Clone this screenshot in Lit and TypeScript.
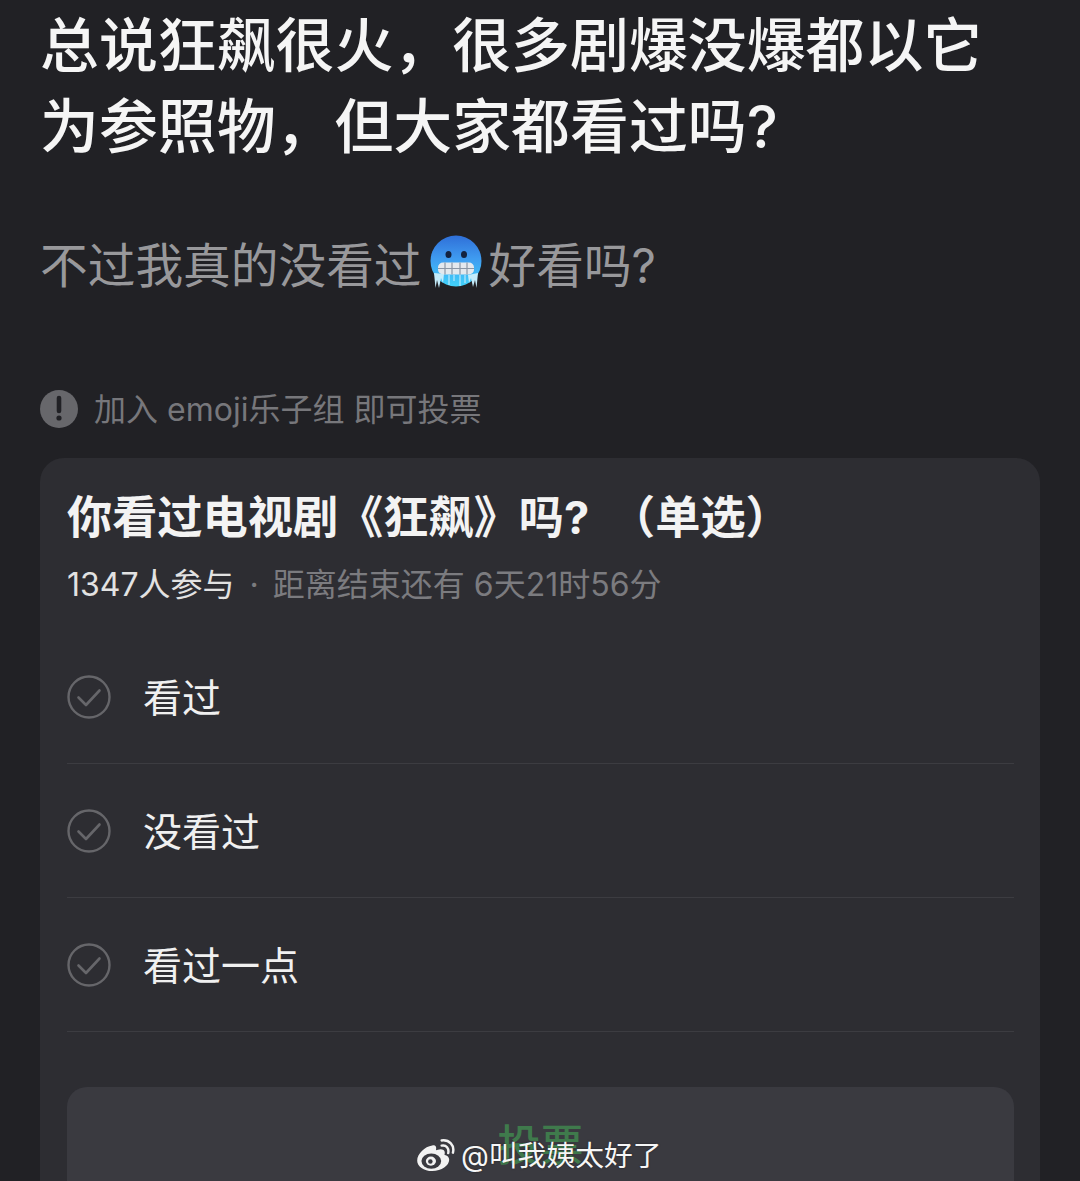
import { LitElement, html, css, svg } from 'lit';
import { customElement } from 'lit/decorators.js';

const OPTIONS = ['看过', '没看过', '看过一点'];

// freezing face emoji, drawn to sit inline with the subtitle text
const coldFace = svg`
  <svg class="emoji" viewBox="0 0 54 54" width="54" height="54">
    <defs>
      <linearGradient id="cold" x1="0" y1="0" x2="0" y2="1">
        <stop offset="0" stop-color="#2f6fd8"></stop>
        <stop offset="0.45" stop-color="#3f9bf0"></stop>
        <stop offset="1" stop-color="#41d3fb"></stop>
      </linearGradient>
    </defs>
    <circle cx="27" cy="26" r="25.5" fill="url(#cold)"></circle>
    <ellipse cx="19.5" cy="19.5" rx="3" ry="3.5" fill="#13223f"></ellipse>
    <ellipse cx="35" cy="19.5" rx="3" ry="3.5" fill="#13223f"></ellipse>
    <path d="M14 27.5h26a5 5 0 0 1 5 5v2a5 5 0 0 1-5 5H14a5 5 0 0 1-5-5v-2a5 5 0 0 1 5-5z" fill="#e4e9ee"></path>
    <path d="M9 33.5h36M16 27.5v12M23 27.5v12M31 27.5v12M38 27.5v12" stroke="#8b97a6" stroke-width="1.2" fill="none"></path>
    <path d="M5 38l1.5 15 1.5-8 2 8 2-10 2 5 1-9zM49 38l-1.5 15-1.5-8-2 7-2-9-2 5-1-8z" fill="#c4ecfb"></path>
    <path d="M20 40v10M25 40v6M31 40v11M36 40v8" stroke="#c4ecfb" stroke-width="1.1" fill="none"></path>
  </svg>
`;

const weiboLogo = svg`
  <svg class="wb" viewBox="0 0 40 34" width="38" height="32">
    <path d="M16 7C8 8 0 16 0 23c0 6 7 11 16 11 10 0 18-6 18-12 0-4-4-5-5-5 1-3 0-6-4-6-2 0-4 1-5 1 1-4-1-6-4-5z" fill="#f2f2f2"></path>
    <ellipse cx="15" cy="23.5" rx="10.5" ry="8" fill="#3a3a40"></ellipse>
    <ellipse cx="14.6" cy="23.5" rx="5.4" ry="4.8" fill="#f2f2f2"></ellipse>
    <circle cx="14" cy="24" r="2.4" fill="#3a3a40"></circle>
    <path d="M26 7c5-1 8 3 7 8M26 1.5c8-1 14 5 12 13" stroke="#f2f2f2" stroke-width="2.6" stroke-linecap="round" fill="none"></path>
  </svg>
`;

@customElement('app-root')
export class AppRoot extends LitElement {
  static styles = css`
    :host {
      display: block;
      position: relative;
      width: 1080px;
      height: 1181px;
      overflow: hidden;
      background: #212125;
      font-family: Inter, 'Noto Sans CJK SC', 'Noto Sans', sans-serif;
    }

    .page {
      padding: 5px 40px 0;
    }

    .title {
      margin: 0;
      font-size: 58.9px;
      line-height: 81px;
      font-weight: 500;
      color: #f5f5f5;
      white-space: nowrap;
    }

    .sub {
      display: flex;
      align-items: center;
      height: 60px;
      margin-top: 65px;
      font-size: 47.7px;
      color: #98989b;
      white-space: nowrap;
    }

    .emoji {
      margin: 0 6px 0 7px;
      flex: none;
    }

    .notice {
      display: flex;
      align-items: center;
      gap: 16px;
      margin-top: 95px;
      height: 40px;
      font-size: 32px;
      color: #77777b;
      white-space: nowrap;
    }

    .notice svg {
      flex: none;
      margin-top: 3px;
    }

    .card {
      margin-top: 31px;
      padding: 29px 26px 0 27px;
      height: 800px;
      background: #2d2d32;
      border-radius: 24px;
    }

    .poll-title {
      font-size: 45.2px;
      font-weight: 700;
      line-height: 62px;
      color: #f3f3f3;
      white-space: nowrap;
    }

    .poll-kind {
      margin-left: 10px;
    }

    .meta {
      margin-top: 13px;
      font-size: 32px;
      line-height: 46px;
      color: #7b7b7f;
      white-space: nowrap;
    }

    .meta b {
      font-weight: 400;
      color: #e2e2e2;
    }

    .dot {
      margin: 0 5px 0 6px;
    }

    .options {
      margin-top: 22px;
    }

    .option {
      display: flex;
      align-items: center;
      gap: 32px;
      height: 133px;
      border-bottom: 1px solid #3c3c41;
      font-size: 39px;
      color: #f0f0f0;
    }

    .option svg {
      flex: none;
    }

    .option span {
      margin-bottom: 4px;
    }

    .vote {
      margin-top: 55px;
      height: 120px;
      padding-top: 28px;
      box-sizing: border-box;
      background: #3a3a40;
      border-radius: 20px;
      text-align: center;
      font-size: 43px;
      line-height: 60px;
      font-weight: 500;
      color: #3f7a4c;
    }

    .watermark {
      position: absolute;
      left: 417px;
      top: 1136px;
      display: flex;
      align-items: center;
      gap: 6px;
      font-size: 28.8px;
      line-height: 40px;
      color: #f6f6f6;
      text-shadow: 0 0 2px rgba(0, 0, 0, 0.5);
      white-space: nowrap;
    }

    .wb {
      margin-top: -3px;
    }
  `;

  render() {
    return html`
      <div class="page">
        <h1 class="title">总说狂飙很火，很多剧爆没爆都以它<br />为参照物，但大家都看过吗?</h1>
        <div class="sub">不过我真的没看过${coldFace}好看吗?</div>
        <div class="notice">
          <svg viewBox="0 0 38 38" width="38" height="38">
            <circle cx="19" cy="19" r="19" fill="#67676b"></circle>
            <path d="M19 8v13" stroke="#212125" stroke-width="4.6" stroke-linecap="round"></path>
            <circle cx="19" cy="28" r="2.6" fill="#212125"></circle>
          </svg>
          <span>加入 emoji乐子组 即可投票</span>
        </div>
        <div class="card">
          <div class="poll-title">你看过电视剧《狂飙》吗? <span class="poll-kind">（单选）</span></div>
          <div class="meta"><b>1347人参与</b> <span class="dot">·</span> 距离结束还有 6天21时56分</div>
          <div class="options">
            ${OPTIONS.map(
              (o) => html`
                <div class="option">
                  <svg viewBox="0 0 44 44" width="44" height="44">
                    <circle cx="22" cy="22" r="20.5" fill="none" stroke="#66666a" stroke-width="2.4"></circle>
                    <path d="M11.5 22.5l7.5 7.5 13.5-14.5" fill="none" stroke="#66666a" stroke-width="2.6" stroke-linecap="round" stroke-linejoin="round"></path>
                  </svg>
                  <span>${o}</span>
                </div>
              `
            )}
          </div>
          <div class="vote">投票</div>
        </div>
      </div>
      <div class="watermark">${weiboLogo}<span>@叫我姨太好了</span></div>
    `;
  }
}
